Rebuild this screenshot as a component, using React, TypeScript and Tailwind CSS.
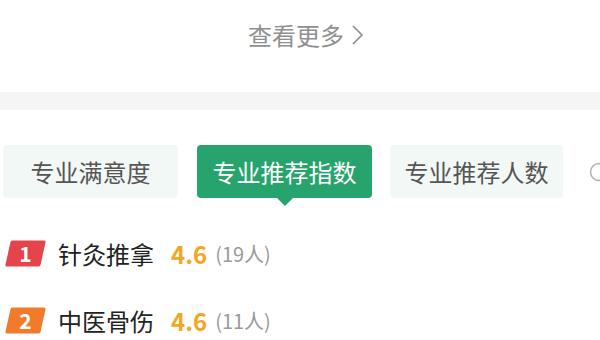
const CJK = { fontFamily: '"Noto Sans CJK SC", "Noto Sans", sans-serif' };

function RankBadge({ n, color }: { n: number; color: string }) {
  return (
    <div className="relative w-[41px] h-[27px] flex items-center justify-center">
      <svg className="absolute inset-0" width="41" height="27" viewBox="0 0 41 27">
        <path
          d="M7 0.5 H39 Q41 0.5 40.5 2.5 L35.5 25 Q35 26.5 33 26.5 H2 Q0 26.5 0.5 24.5 L5.5 2 Q6 0.5 7 0.5 Z"
          fill={color}
        />
      </svg>
      <span className="relative text-white text-[21px] font-bold leading-none">{n}</span>
    </div>
  );
}

function RankRow({ n, color, name, score, count }: { n: number; color: string; name: string; score: string; count: string }) {
  return (
    <div className="flex items-center h-[27px] pl-[5px]">
      <RankBadge n={n} color={color} />
      <span className="ml-[12px] text-[24px] leading-none text-[#222]">{name}</span>
      <span className="ml-[17px] text-[24px] leading-none font-bold text-[#f2a623]">{score}</span>
      <span className="ml-[8px] text-[20px] leading-none text-[#9a9a9a]">{count}</span>
    </div>
  );
}

export default function App() {
  return (
    <div className="w-[600px] h-[340px] overflow-hidden bg-white" style={CJK}>
      {/* 查看更多 */}
      <div className="h-[92px] pt-[21px] pl-[248px] flex">
        <div className="flex items-center h-[27px] text-[24px] leading-none text-[#909090]">
          <span>查看更多</span>
          <svg className="ml-[7px]" width="13" height="22" viewBox="0 0 13 22">
            <path d="M2 2 L11 11 L2 20" fill="none" stroke="#909090" strokeWidth="1.7" />
          </svg>
        </div>
      </div>
      <div className="h-[18px] bg-[#f5f5f5]" />

      {/* tabs */}
      <div className="mt-[35px] pl-[3px] flex items-center whitespace-nowrap">
        <div className="w-[175px] h-[53px] shrink-0 rounded-[4px] bg-[#f2f8f6] flex items-center justify-center text-[24px] text-[#555]">
          专业满意度
        </div>
        <div className="relative ml-[19px] w-[175px] h-[53px] shrink-0 rounded-[4px] bg-[#27a46e] flex items-center justify-center text-[24px] text-white">
          专业推荐指数
          <div className="absolute left-1/2 -translate-x-1/2 top-full w-0 h-0 border-l-[8px] border-r-[8px] border-t-[8px] border-l-transparent border-r-transparent border-t-[#27a46e]" />
        </div>
        <div className="ml-[18px] w-[173px] h-[53px] shrink-0 rounded-[4px] bg-[#f2f8f6] flex items-center justify-center text-[24px] text-[#555]">
          专业推荐人数
        </div>
        <svg className="ml-[26px] shrink-0" width="20" height="20" viewBox="0 0 20 20">
          <circle cx="10" cy="10" r="8.5" fill="none" stroke="#b0b0b0" strokeWidth="1.5" />
        </svg>
      </div>

      {/* ranking */}
      <div className="mt-[42px] flex flex-col gap-[40px]">
        <RankRow n={1} color="#e5444c" name="针灸推拿" score="4.6" count="(19人)" />
        <RankRow n={2} color="#f27b2b" name="中医骨伤" score="4.6" count="(11人)" />
      </div>
    </div>
  );
}
